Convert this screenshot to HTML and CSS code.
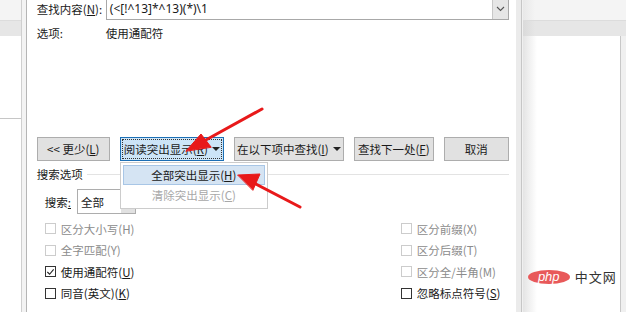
FILE: index.html
```html
<!DOCTYPE html>
<html lang="zh-CN">
<head>
    <meta charset="UTF-8">
    <title>查找和替换</title>
    <link rel="stylesheet" href="styles.css">
</head>
<body>
    <div class="screen">
        <aside class="side-left">
            <div class="side-top"></div>
            <div class="side-band"></div>
            <div class="side-pane"></div>
        </aside>
        <div class="edge-left"></div>

        <main class="dialog">
            <div class="find-row">
                <span class="label">查找内容(<u>N</u>):</span>
                <div class="combo">
                    <span class="combo-text">(&lt;[!^13]*^13)(*)\1</span>
                    <span class="combo-btn">
                        <svg width="9" height="6" viewBox="0 0 9 6"><path d="M1 1l3.5 3.5L8 1" fill="none" stroke="#555" stroke-width="1.1"/></svg>
                    </span>
                </div>
            </div>
            <div class="opt-row">
                <span class="label">选项:</span>
                <span class="opt-value">使用通配符</span>
            </div>

            <div class="btn-row">
                <button class="btn btn-less"><span>&lt;&lt; 更少(<u>L</u>)</span></button>
                <div class="btn-wrap">
                    <button class="btn btn-read"><span>阅读突出显示(<u>R</u>)</span><span class="caret"></span></button>
                    <div class="menu">
                        <div class="menu-item active">全部突出显示(<u>H</u>)</div>
                        <div class="menu-item disabled">清除突出显示(<u>C</u>)</div>
                    </div>
                </div>
                <button class="btn btn-in"><span>在以下项中查找(<u>I</u>)</span><span class="caret"></span></button>
                <button class="btn btn-next"><span>查找下一处(<u>F</u>)</span></button>
                <button class="btn btn-cancel"><span>取消</span></button>
            </div>

            <div class="group-title">
                <span>搜索选项</span>
                <span class="group-line"></span>
            </div>

            <div class="search-row">
                <span class="search-label">搜索<u>:</u></span>
                <div class="select">
                    <span class="select-text">全部</span>
                    <span class="select-btn"></span>
                </div>
            </div>

            <div class="checks">
                <div class="check-col">
                    <label class="check disabled"><span class="box"></span><span>区分大小写(H)</span></label>
                    <label class="check disabled"><span class="box"></span><span>全字匹配(Y)</span></label>
                    <label class="check"><span class="box">
                        <svg width="10" height="10" viewBox="0 0 10 10"><path d="M1.5 5l2.5 2.5L8.5 2" fill="none" stroke="#222" stroke-width="1.2"/></svg>
                    </span><span>使用通配符(<u>U</u>)</span></label>
                    <label class="check"><span class="box"></span><span>同音(英文)(<u>K</u>)</span></label>
                </div>
                <div class="check-col">
                    <label class="check disabled"><span class="box"></span><span>区分前缀(X)</span></label>
                    <label class="check disabled"><span class="box"></span><span>区分后缀(T)</span></label>
                    <label class="check disabled"><span class="box"></span><span>区分全/半角(M)</span></label>
                    <label class="check"><span class="box"></span><span>忽略标点符号(<u>S</u>)</span></label>
                </div>
            </div>
        </main>

        <div class="edge-right"></div>
        <aside class="side-right">
            <div class="side-top"></div>
            <div class="side-band"></div>
            <div class="side-doc">
                <div class="watermark">
                    <span class="wm-logo">php</span>
                    <span class="wm-text">中文网</span>
                </div>
            </div>
        </aside>

        <!-- annotation arrows drawn over the screenshot -->
        <svg class="arrows" width="626" height="312" viewBox="0 0 626 312">
            <g fill="#e8191a" stroke="#e8191a" stroke-linecap="round">
                <path d="M262 109L204 141" stroke-width="3" fill="none"/>
                <path d="M186 151L201 134L211 147Z" stroke-width="1"/>
                <path d="M300 207L254 183" stroke-width="3" fill="none"/>
                <path d="M238 175L260 174L253 190Z" stroke-width="1"/>
            </g>
        </svg>
    </div>
</body>
</html>
```

FILE: styles.css
```css
*{
    margin: 0;
    padding: 0;
    box-sizing: border-box;
}
body{
    font-family: "Noto Sans CJK SC", "Noto Sans", sans-serif;
    font-size: 11.5px;
    color: #1a1a1a;
    background: #fff;
    overflow: hidden;
}
u{
    text-decoration: underline;
    text-underline-offset: 1px;
}
.screen{
    position: relative;
    display: flex;
    width: 626px;
    height: 312px;
    overflow: hidden;
}

/* side panes */
.side-left{
    width: 22px;
    display: flex;
    flex-direction: column;
    border-right: 1px solid #cfcfcf;
}
.side-top{
    height: 20px;
    background: #f4f4f4;
}
.side-band{
    height: 16px;
    background: #e6e6e6;
    border-top: 1px solid #dcdcdc;
}
.side-pane{
    flex: 1;
    background: #fff;
}
.side-pane::after{
    content: "";
    display: block;
    margin-top: 82px;
    height: 1px;
    background: #c6c6c6;
}
.edge-left{
    width: 6px;
    background: linear-gradient(to right, #f3f3f3, #f3f3f3 4px, #b5b5b5 4px, #b5b5b5 5px, #fff 5px);
}
.edge-right{
    width: 8px;
    background: linear-gradient(to right, #fff, #fff 1px, #ebebeb 1px, #ebebeb 6px, #c6c6c6 6px, #c6c6c6 7px, #f0f0f0 7px);
}
.side-right{
    width: 104px;
    display: flex;
    flex-direction: column;
    background: #f0f0f0;
}
.side-right .side-top{
    background: linear-gradient(to right, #e8e8e8, #f4f4f4 12px);
}
.side-right .side-band{
    background: linear-gradient(to right, #dadada, #e6e6e6 12px);
}
.side-doc{
    flex: 1;
    margin-right: 5px;
    background: linear-gradient(to right, #e4e4e4, #fff 14px);
    border-right: 1px solid #c8c8c8;
    display: flex;
    align-items: flex-end;
    padding-bottom: 26px;
    padding-left: 5px;
}
.watermark{
    display: flex;
    align-items: center;
    gap: 5px;
}
.wm-logo{
    width: 42px;
    height: 14px;
    border-radius: 50%;
    background: #e8595a;
    color: #fff;
    font-family: "Liberation Sans", sans-serif;
    font-style: italic;
    font-size: 13px;
    line-height: 13px;
    text-align: center;
}
.wm-text{
    font-size: 13px;
    color: #333;
    letter-spacing: 1px;
}

/* dialog */
.dialog{
    flex: 1;
    background: #fff;
    padding: 0 6px 0 9px;
    display: flex;
    flex-direction: column;
}
.find-row{
    display: flex;
    align-items: center;
    margin-top: -3px;
    height: 23px;
}
.label{
    width: 69px;
    flex: none;
}
.combo{
    flex: 1;
    height: 23px;
    border: 1px solid #a8a8a8;
    display: flex;
    align-items: center;
    padding-left: 3px;
}
.combo-text{
    flex: 1;
    font-family: "Noto Sans", sans-serif;
    font-size: 12px;
}
.combo-btn{
    width: 16px;
    height: 21px;
    background: #e6e6e6;
    border-left: 1px solid #c8c8c8;
    display: flex;
    align-items: center;
    justify-content: center;
}
.opt-row{
    display: flex;
    height: 20px;
    align-items: center;
    margin-top: 3px;
}

.btn-row{
    display: flex;
    gap: 10px;
    margin-top: 94px;
    height: 24px;
}
.btn{
    font: inherit;
    color: #1a1a1a;
    height: 24px;
    background: #e1e1e1;
    border: 1px solid #adadad;
    display: flex;
    align-items: center;
    justify-content: center;
    gap: 4px;
    white-space: nowrap;
}
.btn-less{ width: 73px; }
.btn-wrap{ position: relative; }
.btn-read{
    width: 104px;
    background: #cce4f7;
    border-color: #1c6fb5;
    outline: 1px dotted #333;
    outline-offset: -3px;
}
.btn-in{ width: 110px; }
.btn-next{ width: 80px; }
.btn-cancel{ width: 65px; }
.caret{
    width: 0;
    height: 0;
    border-left: 4px solid transparent;
    border-right: 4px solid transparent;
    border-top: 4px solid #222;
}
.menu{
    position: absolute;
    left: 0;
    top: 25px;
    width: 148px;
    padding: 2px;
    background: #fff;
    border: 1px solid #cccccc;
    z-index: 2;
}
.menu-item{
    height: 20px;
    line-height: 19px;
    text-align: center;
    white-space: nowrap;
}
.menu-item.active{
    background: #d5e4f3;
    border: 1px solid #a8c6e6;
}
.menu-item.disabled{
    color: #a8a8a8;
    margin-top: 1px;
}

.group-title{
    display: flex;
    align-items: center;
    gap: 4px;
    margin-top: 3px;
    height: 20px;
}
.group-line{
    flex: 1;
    height: 1px;
    background: #e3e3e3;
}
.search-row{
    display: flex;
    align-items: center;
    margin-top: 5px;
    padding-left: 8px;
    gap: 6px;
    height: 25px;
}
.select{
    width: 59px;
    height: 25px;
    border: 1px solid #adadad;
    display: flex;
    align-items: center;
    padding-left: 3px;
}
.select-text{ flex: 1; }
.select-btn{
    width: 14px;
    height: 23px;
    background: #e1e1e1;
}

.checks{
    display: flex;
    margin-top: 4px;
    padding-left: 8px;
}
.check-col{
    display: flex;
    flex-direction: column;
}
.check-col:first-child{ width: 356px; }
.check{
    display: flex;
    align-items: center;
    gap: 5px;
    height: 21.5px;
    white-space: nowrap;
}
.check.disabled{
    color: #8c8c8c;
}
.box{
    flex: none;
    width: 11px;
    height: 11px;
    border: 1px solid #333;
    background: #fff;
    display: flex;
    align-items: center;
    justify-content: center;
}
.check.disabled .box{
    border-color: #cccccc;
}

.arrows{
    position: absolute;
    left: 0;
    top: 0;
    pointer-events: none;
    z-index: 5;
}
```
